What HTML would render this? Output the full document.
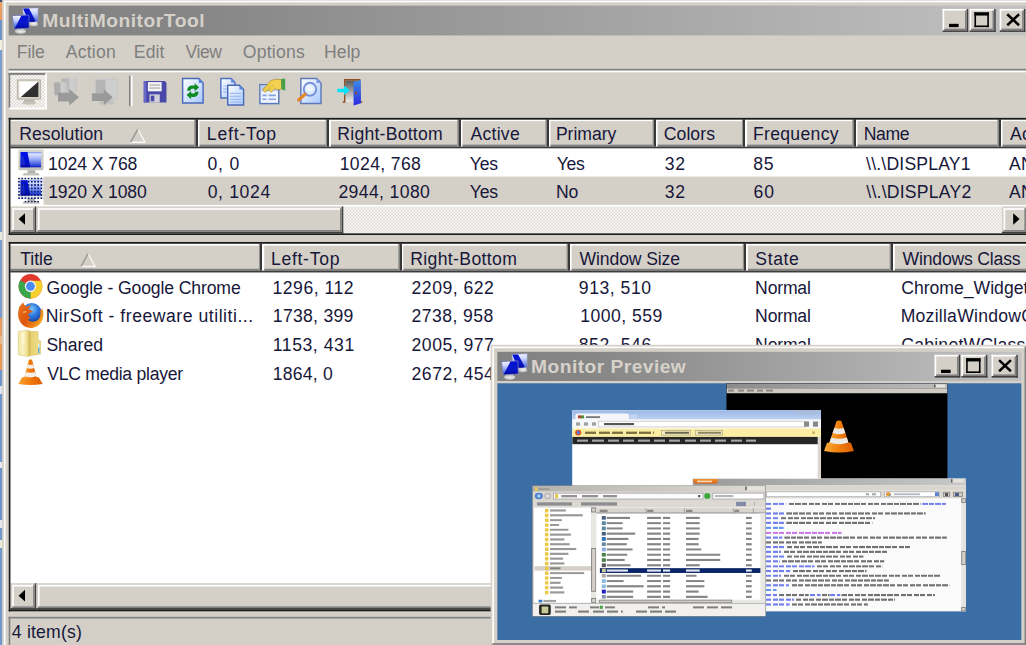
<!DOCTYPE html>
<html><head><meta charset="utf-8"><title>MultiMonitorTool</title>
<style>
html,body{margin:0;padding:0;}
body{width:1026px;height:645px;overflow:hidden;position:relative;background:#D4D0C8;font-family:"Liberation Sans",sans-serif;}
#all{position:absolute;left:-40px;top:-40px;width:1120px;height:740px;}
#in{position:absolute;left:40px;top:40px;width:1040px;height:660px;}
#strip{position:absolute;left:0;top:0;width:4px;height:645px;
 background:linear-gradient(180deg,#3b4a78 0,#3b4a78 2px,#e9a062 2px,#e59a5e 20px,#6f93c6 20px,#6f93c6 40px,#eef0e2 40px,#eef0e2 50px,
 #7c9dcb 50px,#7c9dcb 120px,#8aa6d0 120px,#93a8cc 160px,#7c9dcb 160px,#7c9dcb 232px,#e6eadf 232px,#e6eadf 240px,#7c9dcb 240px,#7c9dcb 318px,
 #e89a5c 318px,#e6a06a 336px,#eab88a 336px,#eab88a 344px,#ea9a58 344px,#ea9a58 370px,#6e96cc 370px,#6e96cc 386px,#dfe6f0 386px,#dfe6f0 394px,
 #6e96cc 394px,#7098cc 462px,#e8ecf0 462px,#e8ecf0 468px,#6c94ca 468px,#6c94ca 520px,#e4e8ee 520px,#e4e8ee 528px,#7298cc 528px,#7298cc 540px,
 #e8eadc 540px,#e8eadc 548px,#7298cc 548px,#7298cc 645px);}
#w{position:absolute;left:0;top:0;width:6460px;height:4120px;transform-origin:0 0;transform:translate(2.3px,-1.0px) scale(0.16,0.1655);
 background:#D4D0C8;font-size:110px;}
#w div,#w span,#w i{position:absolute;box-sizing:border-box;}
.frame{left:0;top:0;right:0;bottom:0;box-shadow:inset 10px 10px #D6D2CA,inset -10px -10px #404040,inset 20px 20px #fff,inset -20px -20px #808080;}
.title{height:180px;background:linear-gradient(90deg,#828282 0,#868686 18%,#c2c2c2 100%);}
.t{white-space:pre;line-height:130px;font-size:110px;color:#17173a;}
.tt{font-weight:bold;color:#D6D2CA;transform:scaleX(1.09);transform-origin:0 50%;}
.menu{color:#7e7e7e;}
.ico{width:160px;height:160px;}
.ico svg{position:absolute;left:0;top:0;display:block;overflow:visible;}
.cb{background:#D4D0C8;box-shadow:inset -10px -10px #404040,inset 10px 10px #fff,inset -20px -20px #808080,inset 20px 20px #D4D0C8;}
.cb svg{position:absolute;left:0;top:0;}
.gmin{left:40px;top:90px;width:60px;height:20px;background:#000;}
.gmax{left:30px;top:20px;width:90px;height:90px;box-shadow:inset 0 0 0 10px #000,inset 0 20px #000;}
.etch{height:20px;border-top:10px solid #808080;border-bottom:10px solid #fff;}
.tbchk{box-shadow:inset 10px 10px #808080,inset -10px -10px #fff;background:repeating-conic-gradient(#fdfdfc 0 25%,#dad7d0 0 50%) 0 0/20px 20px;}
.tbsep{width:20px;border-left:10px solid #808080;border-right:10px solid #fff;}
.list{box-shadow:inset 0 0 0 10.6px #1c1c1c;}
.hdr{background:#D4D0C8;box-shadow:inset 0 10px #fff,inset 0 -10px #404040,inset 0 -20px #808080;}
.hsep{background:linear-gradient(90deg,#a09e96 0,#808080 9px,#383838 9.5px,#383838 21px,#fff 21.5px,#fff 33px);}
.sort{width:100px;height:90px;}
.sbtrack{background:repeating-conic-gradient(#fbfbfa 0 25%,#dcd9d2 0 50%) 0 0/20px 20px;}
.btn3d{background:#D4D0C8;box-shadow:inset -10px -10px #404040,inset 10px 10px #D4D0C8,inset -20px -20px #808080,inset 20px 20px #fff;}
.arl{left:50px;top:40px;width:0;height:0;border-right:40px solid #000;border-top:35px solid transparent;border-bottom:35px solid transparent;}
.arr{left:70px;top:40px;width:0;height:0;border-left:40px solid #000;border-top:35px solid transparent;border-bottom:35px solid transparent;}
.status{box-shadow:inset 10px 10px #808080,inset -10px -10px #fff;}
#pv{background:#D4D0C8;}
#pvc{background:#3A6EA5;overflow:hidden;}

</style></head>
<body>
<div id="all"><div id="in">
<div id="strip"></div>
<div id="w">
<div style="left:0;top:0;right:0;bottom:0"><div style="left:0;top:0;right:0;height:10px;background:#D6D2CA"></div><div style="left:0;top:0;bottom:0;width:10px;background:#D6D2CA"></div><div style="left:10px;top:10px;right:10px;height:10px;background:#fff"></div><div style="left:10px;top:10px;bottom:10px;width:10px;background:#fff"></div><div style="left:0;bottom:0;right:0;height:10px;background:#404040"></div><div style="right:0;top:0;bottom:0;width:10px;background:#404040"></div><div style="left:10px;bottom:10px;right:10px;height:10px;background:#808080"></div><div style="right:10px;top:10px;bottom:10px;width:10px;background:#808080"></div></div>
<div class="title" style="left:40px;top:39.9px;width:6445.6px;height:180.1px;"></div><div class="ico" style="left:60px;top:55px"><svg style="width:160px;height:160px" viewBox="0 0 16 16">
<defs>
<linearGradient id="apL" x1="0" y1="0" x2="0" y2="1"><stop offset="0" stop-color="#f2f4ff"/><stop offset=".35" stop-color="#c8d2ff"/><stop offset="1" stop-color="#3858e0"/></linearGradient>
<linearGradient id="apD" x1="0" y1="0" x2="0" y2="1"><stop offset="0" stop-color="#0010d8"/><stop offset=".6" stop-color="#0818c8"/><stop offset="1" stop-color="#0008a0"/></linearGradient>
<radialGradient id="apS" cx=".55" cy=".4" r=".7"><stop offset="0" stop-color="#f4f4f4"/><stop offset=".6" stop-color="#cfcfcf"/><stop offset="1" stop-color="#8a8a8a"/></radialGradient>
</defs>
<path d="M10.8 8 L15.6 7.8 L16.4 10.4 Q13.8 11.6 10.6 10.8Z" fill="url(#apS)"/>
<path d="M6.8 0.1 L16.4 -0.1 L16.2 8.2 L7.4 8.5Z" fill="url(#apL)" stroke="#98a0c0" stroke-width=".35"/>
<path d="M7 0.3 L10.7 0.25 L14.5 7.3 L14.3 8.2 L10.6 8.35Z" fill="url(#apD)"/>
<ellipse cx="5.3" cy="14.1" rx="3.5" ry="1.6" fill="url(#apS)"/>
<path d="M3.6 12.2 h3.8 v1.4 h-3.8z" fill="#c4c4c4"/>
<path d="M0.3 4.6 L10.6 4.2 L10.8 12.1 L1.5 12.6Z" fill="url(#apD)" stroke="#98a0c0" stroke-width=".35"/>
<path d="M0.55 4.8 L5.9 4.55 L2.2 11.4 L1.5 12.2Z" fill="url(#apL)"/>
</svg></div><span class="t tt" style="left:248.8px;top:64.1px;letter-spacing:3.15px;">MultiMonitorTool</span>
<div style="left:5876.9px;top:59.8px;width:160.6px;height:139.6px;background:#D4D0C8"><div style="left:0;top:0;right:0;height:10px;background:#fff"></div><div style="left:0;top:0;bottom:0;width:10px;background:#fff"></div><div style="left:0;bottom:0;right:0;height:10px;background:#404040"></div><div style="right:0;top:0;bottom:0;width:10px;background:#404040"></div><div style="left:10px;bottom:10px;right:10px;height:10px;background:#808080"></div><div style="right:10px;top:10px;bottom:10px;width:10px;background:#808080"></div><i class="gmin"></i></div><div style="left:6045.6px;top:59.8px;width:163.1px;height:139.6px;background:#D4D0C8"><div style="left:0;top:0;right:0;height:10px;background:#fff"></div><div style="left:0;top:0;bottom:0;width:10px;background:#fff"></div><div style="left:0;bottom:0;right:0;height:10px;background:#404040"></div><div style="right:0;top:0;bottom:0;width:10px;background:#404040"></div><div style="left:10px;bottom:10px;right:10px;height:10px;background:#808080"></div><div style="right:10px;top:10px;bottom:10px;width:10px;background:#808080"></div><div style="left:30px;top:20px;width:90px;height:90px"><div style="left:0;top:0;right:0;height:20px;background:#000"></div><div style="left:0;bottom:0;right:0;height:10px;background:#000"></div><div style="left:0;top:0;bottom:0;width:10px;background:#000"></div><div style="right:0;top:0;bottom:0;width:10px;background:#000"></div></div></div><div style="left:6233.8px;top:59.8px;width:160.6px;height:139.6px;background:#D4D0C8"><div style="left:0;top:0;right:0;height:10px;background:#fff"></div><div style="left:0;top:0;bottom:0;width:10px;background:#fff"></div><div style="left:0;bottom:0;right:0;height:10px;background:#404040"></div><div style="right:0;top:0;bottom:0;width:10px;background:#404040"></div><div style="left:10px;bottom:10px;right:10px;height:10px;background:#808080"></div><div style="right:10px;top:10px;bottom:10px;width:10px;background:#808080"></div><svg style="width:160px;height:140px" viewBox="0 0 16 14"><path d="M4.7 3.2 L12.1 9.9 M12.1 3.2 L4.7 9.9" stroke="#000" stroke-width="1.55" fill="none"/></svg></div>
<span class="t menu" style="left:90.7px;top:256.2px;letter-spacing:-0.95px;">File</span><span class="t menu" style="left:396.8px;top:256.2px;letter-spacing:1.24px;">Action</span><span class="t menu" style="left:822.2px;top:256.2px;letter-spacing:0.38px;">Edit</span><span class="t menu" style="left:1144.7px;top:256.2px;letter-spacing:-2.5px;">View</span><span class="t menu" style="left:1503.5px;top:256.2px;letter-spacing:1.31px;">Options</span><span class="t menu" style="left:2011.2px;top:256.2px;letter-spacing:0.2px;">Help</span>
<div style="left:40px;top:422.4px;width:6445.6px;height:10.9px;background:#808080"></div><div style="left:40px;top:433.2px;width:6445.6px;height:10.3px;background:#fff"></div>
<div class="tbchk" style="left:38.8px;top:447.1px;width:240.6px;height:219.9px;"><div style="left:0;top:0;right:0;height:10px;background:#808080"></div><div style="left:0;top:0;bottom:0;width:10px;background:#808080"></div><div style="left:0;bottom:0;right:0;height:10px;background:#fff"></div><div style="right:0;top:0;bottom:0;width:10px;background:#fff"></div></div><div class="ico" style="left:90px;top:486.4px"><svg style="width:160px;height:160px" viewBox="0 0 16 16">
<rect x="0.4" y="0.3" width="14.4" height="11.6" fill="#d8d4c8" stroke="#b4b0a4" stroke-width=".6"/>
<rect x="1.6" y="1.2" width="12" height="9.4" fill="#fff"/>
<path d="M13.6 1.2 L13.6 10.6 L2.6 10.6Z" fill="#303030"/>
<path d="M5 12 h5.6 l0.8 1.6 h-7.2z" fill="#b8b8b0"/>
<ellipse cx="7.8" cy="14.3" rx="4.6" ry="1" fill="#c4c4bc"/>
</svg></div><div class="ico" style="left:320px;top:476.1px"><svg style="width:160px;height:160px" viewBox="0 0 16 16">
<defs><linearGradient id="dsA" x1="0" y1="0" x2="1" y2="0"><stop offset="0" stop-color="#b2b2b2"/><stop offset=".45" stop-color="#bcbcbc"/><stop offset=".55" stop-color="#cfcfcf"/><stop offset="1" stop-color="#c6c6c6"/></linearGradient></defs>
<g>
<path d="M5 0.4 L14.8 0.2 L14.6 8.6 L5.4 9Z" fill="url(#dsA)"/>
<path d="M0.2 3 L8.2 2.6 L8.4 10.2 L0.8 10.6Z" fill="url(#dsA)"/>
<path d="M0.2 3 L4.2 2.8 L4.4 10.4 L0.8 10.6Z" fill="#adadad"/>
<path d="M2.8 9 L9.8 9 L9.8 6.8 L16 11.8 L9.8 16.8 L9.8 14.4 L2.8 14.4Z" fill="#9a9a9a"/>
</g>
</svg></div><div class="ico" style="left:560px;top:476.1px"><svg style="width:160px;height:160px" viewBox="0 0 16 16">
<g>
<path d="M1.8 0.6 L16.2 0.4 L16.2 13.4 L1.8 13.4Z" fill="#c8c8c8"/>
<path d="M2.6 1.4 L8.6 1.4 L8.6 9.4 L2.6 9.4Z" fill="#b4b4b4"/>
<path d="M8.6 1.4 L15.4 1.4 L15.4 12.4 L8.6 12.4Z" fill="#cecece"/>
<path d="M5.4 13.4 L13 13.4 L14.2 16.2 L4.2 16.2Z" fill="#c2c2c2"/>
<path d="M0 9.4 L7.4 9.4 L7.4 7 L13 11.8 L7.4 16.6 L7.4 14 L0 14Z" fill="#9a9a9a"/>
</g>
</svg></div><div class="ico" style="left:880px;top:476.1px"><svg style="width:160px;height:160px" viewBox="0 0 16 16">
<path d="M0.4 2 L13.6 2 L14.6 3 L14.6 15 L0.4 15Z" fill="#4848a8"/>
<path d="M0.4 2 L2 2 L2 15 L0.4 15Z" fill="#6868c8"/>
<rect x="3" y="2.6" width="8.6" height="5.6" fill="#f4f4f4"/>
<rect x="4" y="4" width="6.6" height=".8" fill="#b0b0b0"/><rect x="4" y="5.8" width="6.6" height=".8" fill="#b0b0b0"/>
<rect x="4" y="10" width="6.4" height="5" fill="#d0d0d8"/>
<rect x="4.8" y="10.8" width="2.2" height="3.4" fill="#4848a8"/>
</svg></div><div class="ico" style="left:1120px;top:476.1px"><svg style="width:160px;height:160px" viewBox="0 0 16 16"><defs><linearGradient id="pgA" x1="0" y1="0" x2="1" y2="1"><stop offset="0" stop-color="#ffffff"/><stop offset="1" stop-color="#a8c8ff"/></linearGradient></defs>
<path d="M0.7 0.5 L10.8 0.5 L13.5 3.2 L13.5 15.3 L0.7 15.3Z" fill="url(#pgA)" stroke="#4868b8" stroke-width=".9"/>
<path d="M10.8 0.5 L10.8 3.2 L13.5 3.2Z" fill="#5888e0"/>
<path d="M3.6 7.8 C3.6 5 5.8 4.2 8.2 4.8 L8.2 3.2 L11 5.8 L8.2 8.2 L8.2 6.8 C6.6 6.5 5.6 6.9 5.6 7.8Z" fill="#0c8c20"/>
<path d="M10.6 8.4 C10.6 11.2 8.4 12 6 11.4 L6 13 L3.2 10.4 L6 8 L6 9.4 C7.6 9.7 8.6 9.3 8.6 8.4Z" fill="#0c8c20"/>
</svg></div><div class="ico" style="left:1360px;top:476.1px"><svg style="width:160px;height:160px" viewBox="0 0 16 16"><defs><linearGradient id="pgA" x1="0" y1="0" x2="1" y2="1"><stop offset="0" stop-color="#ffffff"/><stop offset="1" stop-color="#a8c8ff"/></linearGradient></defs>
<path d="M0.6 0.5 L7 0.5 L9.4 2.9 L9.4 12.2 L0.6 12.2Z" fill="url(#pgA)" stroke="#5070c0" stroke-width=".9"/>
<path d="M7 0.5 L7 2.9 L9.4 2.9Z" fill="#5888e0"/>
<path d="M2 5 h5.6 M2 6.8 h5.6 M2 8.6 h5.6" stroke="#a8c4f4" stroke-width=".8"/>
<path d="M4.9 4.5 L12.2 4.5 L14.8 7.1 L14.8 16.4 L4.9 16.4Z" fill="url(#pgA)" stroke="#4868b8" stroke-width=".9"/>
<path d="M12.2 4.5 L12.2 7.1 L14.8 7.1Z" fill="#5888e0"/>
<path d="M6.2 9.4 h7.2 M6.2 11.2 h7.2 M6.2 13 h7.2 M6.2 14.7 h7.2" stroke="#9cbcf4" stroke-width=".8"/>
</svg></div><div class="ico" style="left:1600px;top:476.1px"><svg style="width:160px;height:160px" viewBox="0 0 16 16">
<rect x="1" y="4.2" width="11.8" height="11.4" fill="#eef3ff" stroke="#5878b8" stroke-width=".9"/>
<rect x="1.5" y="4.7" width="10.8" height="3.4" fill="#b8ccf4"/>
<path d="M2.6 10.6 h2.6 M6.4 10.6 h4.6 M2.6 13 h2.6 M6.4 13 h4.6" stroke="#88a4dc" stroke-width="1"/>
<path d="M2.6 7.4 L7.2 2.2 C8.6 0.8 12.6 0.8 14.6 1.2 L14.8 6.6 C13.2 7.4 11.4 7.2 10.2 6.6 L8.2 8.8 L6.2 7.2 L4.2 8.8Z" fill="#f2d24e" stroke="#a88820" stroke-width=".4"/>
<path d="M3.4 7.6 L7.6 3.2 M5 8 L8.6 4 M6.6 7.6 L9.6 4.4" stroke="#b89828" stroke-width=".45" stroke-dasharray=".7 .6"/>
<path d="M14.2 0.8 L16.8 0.4 L16.8 7.8 L14.4 6.8Z" fill="#48a048"/>
</svg></div><div class="ico" style="left:1840px;top:476.1px"><svg style="width:160px;height:160px" viewBox="0 0 16 16"><defs><linearGradient id="pgA" x1="0" y1="0" x2="1" y2="1"><stop offset="0" stop-color="#ffffff"/><stop offset="1" stop-color="#a8c8ff"/></linearGradient></defs>
<path d="M2.6 0.4 L12.4 0.4 L15.2 3.2 L15.2 15.5 L2.6 15.5Z" fill="url(#pgA)" stroke="#6078b8" stroke-width=".9"/>
<path d="M12.4 0.4 L12.4 3.2 L15.2 3.2Z" fill="#7898e0"/>
<circle cx="8.3" cy="6.9" r="3.9" fill="#dceaff" stroke="#7890d8" stroke-width="1.2"/>
<circle cx="8" cy="6.4" r="2" fill="#f4f8ff" opacity=".8"/>
<path d="M5.2 9.9 L1.2 13.4" stroke="#e08828" stroke-width="2" stroke-linecap="round"/>
</svg></div><div class="ico" style="left:2080px;top:476.1px"><svg style="width:160px;height:160px" viewBox="0 0 16 16">
<defs><linearGradient id="drA" x1="0" y1="0" x2="0" y2="1"><stop offset="0" stop-color="#3c8ce8"/><stop offset="1" stop-color="#2c28e0"/></linearGradient>
<linearGradient id="drB" x1="0" y1="0" x2="0" y2="1"><stop offset="0" stop-color="#585858"/><stop offset="1" stop-color="#e8e8e8"/></linearGradient></defs>
<path d="M6.4 1.6 L15 1.6 L15 14.4 L6.4 14.4Z" fill="url(#drB)"/>
<path d="M4.8 14.6 L6 14.6 L6 1.2 L15.4 1.2 L15.4 14.6 L17 14.6" fill="none" stroke="#905020" stroke-width=".9"/>
<path d="M11.4 2.6 L16 1.4 L16.2 15.4 L11.6 16.8Z" fill="url(#drA)"/>
<rect x="12.6" y="8.4" width="1.1" height="1.6" fill="#905020"/>
<path d="M1.4 6.6 L5.6 6.6 L5.6 4.6 L9.2 7.6 L5.6 10.6 L5.6 8.7 L1.4 8.7Z" fill="#00e4f8"/>
</svg></div><div style="left:791.9px;top:463.4px;width:10.6px;height:184.9px;background:#808080"></div><div style="left:802.5px;top:463.4px;width:11.9px;height:184.9px;background:#fff"></div>
<div style="left:40px;top:718.1px;width:6445.6px;height:708.2px;background:#fff"></div><div style="left:50px;top:728.4px;width:6435.6px;height:173.7px;background:#D4D0C8"><div style="left:0;top:0;right:0;height:10px;background:#fff"></div><div style="left:0;bottom:10px;right:0;height:12px;background:#808080"></div><div style="left:0;bottom:0;right:0;height:10.5px;background:#3c3c3c"></div></div><div class="hsep" style="left:1199.4px;top:726.6px;width:32.5px;height:164px;"></div><div class="hsep" style="left:2021.2px;top:726.6px;width:32.5px;height:164px;"></div><div class="hsep" style="left:2843.1px;top:726.6px;width:32.5px;height:164px;"></div><div class="hsep" style="left:3393.8px;top:726.6px;width:32.5px;height:164px;"></div><div class="hsep" style="left:4063.8px;top:726.6px;width:32.5px;height:164px;"></div><div class="hsep" style="left:4622.5px;top:726.6px;width:32.5px;height:164px;"></div><div class="hsep" style="left:5311.9px;top:726.6px;width:32.5px;height:164px;"></div><div class="hsep" style="left:6218.8px;top:726.6px;width:32.5px;height:164px;"></div><span class="t h" style="left:105.2px;top:750.5px;letter-spacing:0.55px;">Resolution</span><span class="t h" style="left:1278.3px;top:750.5px;letter-spacing:5px;">Left-Top</span><span class="t h" style="left:2093.7px;top:750.5px;letter-spacing:1.52px;">Right-Bottom</span><span class="t h" style="left:2925.7px;top:750.5px;letter-spacing:1.75px;">Active</span><span class="t h" style="left:3460px;top:750.5px;letter-spacing:-0.24px;">Primary</span><span class="t h" style="left:4134.3px;top:750.5px;letter-spacing:0.37px;">Colors</span><span class="t h" style="left:4691.2px;top:750.5px;letter-spacing:1.96px;">Frequency</span><span class="t h" style="left:5383.7px;top:750.5px;letter-spacing:-2.5px;">Name</span><span class="t h" style="left:6298px;top:750.5px;letter-spacing:1.5px;">Ac</span><div class="sort" style="left:796.9px;top:769.2px"><svg style="width:100px;height:90px" viewBox="0 0 10 9"><path d="M5 0.6 L9.5 8.4 L0.5 8.4" fill="none" stroke="#fff" stroke-width=".9" opacity=".8"/><path d="M5 0.6 L0.6 8.2" fill="none" stroke="#9a9a96" stroke-width=".95"/></svg></div>
<div style="left:258.1px;top:1072.5px;width:6227.5px;height:171px;background:#D4D0C8"></div><div class="ico" style="left:99.4px;top:908.8px"><svg style="width:160px;height:160px" viewBox="0 0 16 16">
<defs>
<linearGradient id="mnR" x1="0" y1="0" x2="0" y2="1"><stop offset="0" stop-color="#6f8cf4"/><stop offset=".12" stop-color="#dfe6ff"/><stop offset=".45" stop-color="#9fb0f8"/><stop offset=".85" stop-color="#3450e0"/><stop offset="1" stop-color="#0818b4"/></linearGradient>
<linearGradient id="mnL" x1="0" y1="0" x2="0" y2="1"><stop offset="0" stop-color="#0010ec"/><stop offset=".6" stop-color="#0010d0"/><stop offset="1" stop-color="#0008a0"/></linearGradient>
<linearGradient id="mnF" x1="0" y1="0" x2="0" y2="1"><stop offset="0" stop-color="#d6d6ce"/><stop offset="1" stop-color="#c2c2ba"/></linearGradient>
</defs>
<rect x="0.2" y="0.1" width="15.7" height="12.4" rx=".7" fill="url(#mnF)"/>
<rect x="1.5" y="1.6" width="12.8" height="9.2" fill="url(#mnR)"/>
<path d="M1.5 1.6 L5.8 1.6 L7.6 10.8 L1.5 10.8Z" fill="url(#mnL)"/>
<path d="M1.5 4.5 L3.4 3.6 L4.4 9.4 L1.5 9.8Z" fill="#3040d8" opacity=".5"/>
<path d="M5.9 12.5 h4.8 v1.7 h-4.8z" fill="#b2b2aa"/>
<path d="M3.6 14.2 h9 l.9 1.6 h-10.8z" fill="#c2c2ba"/>
</svg></div><div class="ico" style="left:99.4px;top:1079.2px"><svg style="width:160px;height:160px" viewBox="0 0 16 16">
<defs>
<linearGradient id="mnR" x1="0" y1="0" x2="0" y2="1"><stop offset="0" stop-color="#6f8cf4"/><stop offset=".12" stop-color="#dfe6ff"/><stop offset=".45" stop-color="#9fb0f8"/><stop offset=".85" stop-color="#3450e0"/><stop offset="1" stop-color="#0818b4"/></linearGradient>
<linearGradient id="mnL" x1="0" y1="0" x2="0" y2="1"><stop offset="0" stop-color="#0010ec"/><stop offset=".6" stop-color="#0010d0"/><stop offset="1" stop-color="#0008a0"/></linearGradient>
<linearGradient id="mnF" x1="0" y1="0" x2="0" y2="1"><stop offset="0" stop-color="#d6d6ce"/><stop offset="1" stop-color="#c2c2ba"/></linearGradient>
</defs>
<rect x="0.2" y="0.1" width="15.7" height="12.4" rx=".7" fill="#e8e8e4"/>
<rect x="1.5" y="1.6" width="12.8" height="9.2" fill="url(#mnR)"/>
<path d="M1.5 1.6 L5.8 1.6 L7.6 10.8 L1.5 10.8Z" fill="url(#mnL)"/>
<path d="M1.5 4.5 L3.4 3.6 L4.4 9.4 L1.5 9.8Z" fill="#3040d8" opacity=".5"/>
<path d="M5.9 12.5 h4.8 v1.7 h-4.8z" fill="#b2b2aa"/>
<path d="M3.6 14.2 h9 l.9 1.6 h-10.8z" fill="#c2c2ba"/>

<defs><pattern id="dth" width="2" height="2" patternUnits="userSpaceOnUse"><rect x="0" y="0" width="1.05" height="1.05" fill="#0a1c78"/></pattern></defs>
<rect x="0" y="0" width="16" height="13" fill="url(#dth)"/>
<rect x="4" y="14" width="9" height="1.1" fill="url(#dth)"/></svg></div><span class="t c" style="left:285.9px;top:927.5px;letter-spacing:-0.49px;">1024 X 768</span><span class="t c" style="left:1282.2px;top:927.5px;letter-spacing:5px;">0, 0</span><span class="t c" style="left:2108.9px;top:927.5px;letter-spacing:2.22px;">1024, 768</span><span class="t c" style="left:2922.1px;top:927.5px;letter-spacing:-1.7px;">Yes</span><span class="t c" style="left:3465.2px;top:927.5px;letter-spacing:-1.7px;">Yes</span><span class="t c" style="left:4140.4px;top:927.5px;letter-spacing:5px;">32</span><span class="t c" style="left:4694.2px;top:927.5px;letter-spacing:3.4px;">85</span><span class="t c" style="left:5398.5px;top:927.5px;letter-spacing:1.21px;">\\.\DISPLAY1</span><span class="t c" style="left:6291.7px;top:927.5px;letter-spacing:1.5px;">AN</span><span class="t c" style="left:286.5px;top:1097.9px;letter-spacing:-0.74px;">1920 X 1080</span><span class="t c" style="left:1283.7px;top:1097.9px;letter-spacing:3.94px;">0, 1024</span><span class="t c" style="left:2100.7px;top:1097.9px;letter-spacing:2.34px;">2944, 1080</span><span class="t c" style="left:2922.1px;top:1097.9px;letter-spacing:-1.7px;">Yes</span><span class="t c" style="left:3461px;top:1097.9px;letter-spacing:-1.75px;">No</span><span class="t c" style="left:4140.4px;top:1097.9px;letter-spacing:5px;">32</span><span class="t c" style="left:4695.3px;top:1097.9px;letter-spacing:5px;">60</span><span class="t c" style="left:5399.9px;top:1097.9px;letter-spacing:1.49px;">\\.\DISPLAY2</span><span class="t c" style="left:6291.7px;top:1097.9px;letter-spacing:1.5px;">AN</span>
<div class="sbtrack" style="left:50px;top:1254.4px;width:6435.6px;height:161.3px;"></div><div style="left:51.9px;top:1254.4px;width:161.2px;height:161.3px;background:#D4D0C8"><div style="left:10px;top:10px;right:10px;height:10px;background:#fff"></div><div style="left:10px;top:10px;bottom:10px;width:10px;background:#fff"></div><div style="left:0;bottom:0;right:0;height:10px;background:#404040"></div><div style="right:0;top:0;bottom:0;width:10px;background:#404040"></div><div style="left:10px;bottom:10px;right:10px;height:10px;background:#808080"></div><div style="right:10px;top:10px;bottom:10px;width:10px;background:#808080"></div><i class="arl"></i></div><div style="left:213.1px;top:1254.4px;width:1917.5px;height:161.3px;background:#D4D0C8"><div style="left:10px;top:10px;right:10px;height:10px;background:#fff"></div><div style="left:10px;top:10px;bottom:10px;width:10px;background:#fff"></div><div style="left:0;bottom:0;right:0;height:10px;background:#404040"></div><div style="right:0;top:0;bottom:0;width:10px;background:#404040"></div><div style="left:10px;bottom:10px;right:10px;height:10px;background:#808080"></div><div style="right:10px;top:10px;bottom:10px;width:10px;background:#808080"></div></div><div style="left:6248.1px;top:1254.4px;width:160px;height:161.3px;background:#D4D0C8"><div style="left:10px;top:10px;right:10px;height:10px;background:#fff"></div><div style="left:10px;top:10px;bottom:10px;width:10px;background:#fff"></div><div style="left:0;bottom:0;right:0;height:10px;background:#404040"></div><div style="right:0;top:0;bottom:0;width:10px;background:#404040"></div><div style="left:10px;bottom:10px;right:10px;height:10px;background:#808080"></div><div style="right:10px;top:10px;bottom:10px;width:10px;background:#808080"></div><i class="arr"></i></div>
<div style="left:40px;top:718.1px;width:6445.6px;height:708.2px;"><div style="left:0;top:0;right:0;height:10.6px;background:#1c1c1c"></div><div style="left:0;top:0;bottom:0;width:10.6px;background:#1c1c1c"></div><div style="left:0;bottom:0;right:0;height:10.6px;background:#1c1c1c"></div><div style="right:0;top:0;bottom:0;width:10.6px;background:#1c1c1c"></div></div>
<div style="left:40px;top:1468px;width:6445.6px;height:2231.7px;background:#fff"></div><div style="left:50px;top:1479.5px;width:6435.6px;height:172.5px;background:#D4D0C8"><div style="left:0;top:0;right:0;height:10px;background:#fff"></div><div style="left:0;bottom:10px;right:0;height:12px;background:#808080"></div><div style="left:0;bottom:0;right:0;height:10.5px;background:#3c3c3c"></div></div><div class="hsep" style="left:1604.4px;top:1477.6px;width:32.5px;height:162.8px;"></div><div class="hsep" style="left:2473.8px;top:1477.6px;width:32.5px;height:162.8px;"></div><div class="hsep" style="left:3525.6px;top:1477.6px;width:32.5px;height:162.8px;"></div><div class="hsep" style="left:4627.5px;top:1477.6px;width:32.5px;height:162.8px;"></div><div class="hsep" style="left:5545px;top:1477.6px;width:32.5px;height:162.8px;"></div><span class="t h" style="left:112.1px;top:1501.5px;letter-spacing:-0.07px;">Title</span><span class="t h" style="left:1679.2px;top:1501.5px;letter-spacing:4.35px;">Left-Top</span><span class="t h" style="left:2549.1px;top:1501.5px;letter-spacing:2.29px;">Right-Bottom</span><span class="t h" style="left:3608px;top:1501.5px;letter-spacing:-0.76px;">Window Size</span><span class="t h" style="left:4706.7px;top:1501.5px;letter-spacing:3.59px;">State</span><span class="t h" style="left:5626.9px;top:1501.5px;letter-spacing:-1.22px;">Windows Class</span><div class="sort" style="left:485.6px;top:1520.8px"><svg style="width:100px;height:90px" viewBox="0 0 10 9"><path d="M5 0.6 L9.5 8.4 L0.5 8.4" fill="none" stroke="#fff" stroke-width=".9" opacity=".8"/><path d="M5 0.6 L0.6 8.2" fill="none" stroke="#9a9a96" stroke-width=".95"/></svg></div>
<div class="ico" style="left:95.6px;top:1655.6px"><svg style="width:160px;height:160px" viewBox="0 0 16 16">
<circle cx="8" cy="8" r="7.4" fill="#e23a2e"/>
<path d="M8 8 L1.6 4.3 A7.4 7.4 0 0 0 8.2 15.4 L11.3 9.9Z" fill="#3aa84a"/>
<path d="M8 8 L8.2 15.4 A7.4 7.4 0 0 0 14.6 4.6 L8 4.6Z" fill="#f7cf2e"/>
<circle cx="8" cy="8" r="3.5" fill="#f4f4f4"/>
<circle cx="8" cy="8" r="2.7" fill="#4a8af0"/>
</svg></div><span class="t c" style="left:277px;top:1677.7px;letter-spacing:-0.77px;">Google - Google Chrome</span><span class="t c" style="left:1689.2px;top:1677.7px;letter-spacing:3.05px;">1296, 112</span><span class="t c" style="left:2558px;top:1677.7px;letter-spacing:3.12px;">2209, 622</span><span class="t c" style="left:3603.4px;top:1677.7px;letter-spacing:3.23px;">913, 510</span><span class="t c" style="left:4705.1px;top:1677.7px;letter-spacing:-1.2px;">Normal</span><span class="t c" style="left:5618.1px;top:1677.7px;letter-spacing:0px;">Chrome_WidgetWin_0</span>
<div class="ico" style="left:95.6px;top:1827.8px"><svg style="width:160px;height:160px" viewBox="0 0 16 16">
<defs><radialGradient id="ffG" cx=".5" cy=".3" r=".65"><stop offset="0" stop-color="#7cc4fa"/><stop offset=".5" stop-color="#2c78dc"/><stop offset="1" stop-color="#183c9c"/></radialGradient>
<linearGradient id="ffO" x1="0" y1="0.2" x2="1" y2="0.8"><stop offset="0" stop-color="#e8701c"/><stop offset=".45" stop-color="#de5610"/><stop offset=".8" stop-color="#f08c18"/><stop offset="1" stop-color="#f8b82c"/></linearGradient></defs>
<circle cx="8.8" cy="7.2" r="6.3" fill="url(#ffG)"/>
<path d="M1.4 2.6 C2.2 2.2 2.8 1.2 3.4 0.4 C3.8 1.8 4.6 2.6 5.6 3 C6.6 2.4 7.6 2.2 8.6 2.4 C7.6 3 7 3.8 6.8 4.8 C7.8 5 8.8 5.4 9.6 6.2 C8.4 6.6 7.4 6.8 6.8 7.6 C6.4 8.6 7 9.6 8.2 9.8 C7.4 10.6 6.4 11 6.4 11 C8 12.6 11 12.6 12.8 11 C14.2 9.6 14.6 7.4 14 5.2 C14.8 5.6 15.2 4.8 15.2 3.8 C16.4 6.4 16.4 9.8 14.9 12.2 C13 15.2 9.6 16.6 6.2 15.7 C2.4 14.6 0 11 0.3 7.2 C0.4 5.4 0.8 3.8 1.4 2.6Z" fill="url(#ffO)"/>
<path d="M3 6.4 C3.8 5.6 5 5.6 5.8 6 C5 6.6 4 7.4 3 6.4Z" fill="#f8c860" opacity=".7"/>
</svg></div><span class="t c" style="left:270.8px;top:1850.8px;letter-spacing:3.31px;">NirSoft - freeware utiliti...</span><span class="t c" style="left:1690.8px;top:1850.8px;letter-spacing:1.71px;">1738, 399</span><span class="t c" style="left:2557.9px;top:1850.8px;letter-spacing:2.6px;">2738, 958</span><span class="t c" style="left:3611.9px;top:1850.8px;letter-spacing:2.87px;">1000, 559</span><span class="t c" style="left:4705.1px;top:1850.8px;letter-spacing:-1.2px;">Normal</span><span class="t c" style="left:5614.9px;top:1850.8px;letter-spacing:1.5px;">MozillaWindowClass</span>
<div class="ico" style="left:95.6px;top:2000px"><svg style="width:160px;height:160px" viewBox="0 0 16 16">
<defs><linearGradient id="fdA" x1="0" y1="0" x2="1" y2="0"><stop offset="0" stop-color="#f3e8a6"/><stop offset=".5" stop-color="#f8f0c0"/><stop offset="1" stop-color="#ecd97c"/></linearGradient>
<linearGradient id="fdB" x1="0" y1="0" x2="1" y2="0"><stop offset="0" stop-color="#e6cf6c"/><stop offset="1" stop-color="#f0e090"/></linearGradient></defs>
<path d="M8 0.9 L12.7 0.9 L12.7 5.9 L14.3 6.5 L14.3 14.5 L8 15.5Z" fill="url(#fdB)" stroke="#d9c36a" stroke-width=".4"/>
<path d="M0.4 0.9 L6.7 0.2 L6.7 16.1 L0.4 14.9Z" fill="url(#fdA)" stroke="#dccb7c" stroke-width=".4"/>
<path d="M6.7 0.2 L8.1 0.9 L8.1 15.5 L6.7 16.1Z" fill="#d6bd58"/>
<path d="M2.2 1.4 L4.2 1.2 L4.4 9 L2.6 9.4Z" fill="#fffbe0" opacity=".55"/>
<rect x="12.7" y="8.4" width=".9" height="5.6" fill="#58aee0"/>
<rect x="12.7" y="8.4" width=".9" height="2.2" fill="#e8f4fc"/>
</svg></div><span class="t c" style="left:275.5px;top:2023.9px;letter-spacing:-0.19px;">Shared</span><span class="t c" style="left:1690.7px;top:2023.9px;letter-spacing:3.44px;">1153, 431</span><span class="t c" style="left:2558px;top:2023.9px;letter-spacing:3.12px;">2005, 977</span><span class="t c" style="left:3602.6px;top:2023.9px;letter-spacing:3.62px;">852, 546</span><span class="t c" style="left:4705.1px;top:2023.9px;letter-spacing:-1.2px;">Normal</span><span class="t c" style="left:5618.1px;top:2023.9px;letter-spacing:1.5px;">CabinetWClass</span>
<div class="ico" style="left:95.6px;top:2172.2px"><svg style="width:160px;height:160px" viewBox="0 0 16 16">
<defs><linearGradient id="vlA" x1="0" y1="0" x2="1" y2="0"><stop offset="0" stop-color="#f8a434"/><stop offset=".45" stop-color="#f27c0c"/><stop offset="1" stop-color="#dc5c00"/></linearGradient></defs>
<path d="M0.4 15.5 L2.8 11.4 L13.2 11.4 L15.6 15.5 Q8 16.6 0.4 15.5Z" fill="url(#vlA)"/>
<path d="M7 1 Q8 0 9 1 L12 12 Q8 13.6 4 12Z" fill="url(#vlA)"/>
<path d="M6.3 3.6 Q8 4.2 9.7 3.6 L10.3 5.8 Q8 6.6 5.7 5.8Z" fill="#f2efea"/>
<path d="M5 8.2 Q8 9.2 11 8.2 L11.7 10.8 Q8 12.2 4.3 10.8Z" fill="#f2efea"/>
</svg></div><span class="t c" style="left:280.5px;top:2197px;letter-spacing:-1.67px;">VLC media player</span><span class="t c" style="left:1689.6px;top:2197px;letter-spacing:1.62px;">1864, 0</span><span class="t c" style="left:2558px;top:2197px;letter-spacing:3.12px;">2672, 454</span><span class="t c" style="left:3603.4px;top:2197px;letter-spacing:3.23px;">808, 454</span><span class="t c" style="left:4705.1px;top:2197px;letter-spacing:-1.2px;">Normal</span><span class="t c" style="left:5624.4px;top:2197px;letter-spacing:0px;">QWidget</span>
<div class="sbtrack" style="left:50px;top:3529.9px;width:6435.6px;height:160.1px;"></div><div style="left:51.9px;top:3529.9px;width:161.2px;height:160.1px;background:#D4D0C8"><div style="left:10px;top:10px;right:10px;height:10px;background:#fff"></div><div style="left:10px;top:10px;bottom:10px;width:10px;background:#fff"></div><div style="left:0;bottom:0;right:0;height:10px;background:#404040"></div><div style="right:0;top:0;bottom:0;width:10px;background:#404040"></div><div style="left:10px;bottom:10px;right:10px;height:10px;background:#808080"></div><div style="right:10px;top:10px;bottom:10px;width:10px;background:#808080"></div><i class="arl"></i></div><div style="left:213.1px;top:3529.9px;width:3772.5px;height:160.1px;background:#D4D0C8"><div style="left:10px;top:10px;right:10px;height:10px;background:#fff"></div><div style="left:10px;top:10px;bottom:10px;width:10px;background:#fff"></div><div style="left:0;bottom:0;right:0;height:10px;background:#404040"></div><div style="right:0;top:0;bottom:0;width:10px;background:#404040"></div><div style="left:10px;bottom:10px;right:10px;height:10px;background:#808080"></div><div style="right:10px;top:10px;bottom:10px;width:10px;background:#808080"></div></div>
<div style="left:40px;top:1468px;width:6445.6px;height:2231.7px;"><div style="left:0;top:0;right:0;height:10.6px;background:#1c1c1c"></div><div style="left:0;top:0;bottom:0;width:10.6px;background:#1c1c1c"></div><div style="left:0;bottom:0;right:0;height:10.6px;background:#1c1c1c"></div><div style="right:0;top:0;bottom:0;width:10.6px;background:#1c1c1c"></div></div>
<div style="left:40px;top:3732.9px;width:6445.6px;height:261px;"><div style="left:0;top:0;right:0;height:10px;background:#808080"></div><div style="left:0;top:0;bottom:0;width:10px;background:#808080"></div><div style="left:0;bottom:0;right:0;height:10px;background:#fff"></div><div style="right:0;top:0;bottom:0;width:10px;background:#fff"></div></div><span class="t c" style="left:59.8px;top:3758.9px;letter-spacing:1.16px;">4 item(s)</span>
<div id="pv" style="left:3053.1px;top:2090px;width:3355.6px;height:1822.4px"><div style="left:0;top:0;right:0;height:10px;background:#D6D2CA"></div><div style="left:0;top:0;bottom:0;width:10px;background:#D6D2CA"></div><div style="left:10px;top:10px;right:10px;height:10px;background:#fff"></div><div style="left:10px;top:10px;bottom:10px;width:10px;background:#fff"></div><div style="left:0;bottom:0;right:0;height:10px;background:#404040"></div><div style="right:0;top:0;bottom:0;width:10px;background:#404040"></div><div style="left:10px;bottom:10px;right:10px;height:10px;background:#808080"></div><div style="right:10px;top:10px;bottom:10px;width:10px;background:#808080"></div></div><div class="title" style="left:3093.8px;top:2131.7px;width:3275px;height:176.4px;"></div><div class="ico" style="left:3116.9px;top:2145px"><svg style="width:160px;height:160px" viewBox="0 0 16 16">
<defs>
<linearGradient id="apL" x1="0" y1="0" x2="0" y2="1"><stop offset="0" stop-color="#f2f4ff"/><stop offset=".35" stop-color="#c8d2ff"/><stop offset="1" stop-color="#3858e0"/></linearGradient>
<linearGradient id="apD" x1="0" y1="0" x2="0" y2="1"><stop offset="0" stop-color="#0010d8"/><stop offset=".6" stop-color="#0818c8"/><stop offset="1" stop-color="#0008a0"/></linearGradient>
<radialGradient id="apS" cx=".55" cy=".4" r=".7"><stop offset="0" stop-color="#f4f4f4"/><stop offset=".6" stop-color="#cfcfcf"/><stop offset="1" stop-color="#8a8a8a"/></radialGradient>
</defs>
<path d="M10.8 8 L15.6 7.8 L16.4 10.4 Q13.8 11.6 10.6 10.8Z" fill="url(#apS)"/>
<path d="M6.8 0.1 L16.4 -0.1 L16.2 8.2 L7.4 8.5Z" fill="url(#apL)" stroke="#98a0c0" stroke-width=".35"/>
<path d="M7 0.3 L10.7 0.25 L14.5 7.3 L14.3 8.2 L10.6 8.35Z" fill="url(#apD)"/>
<ellipse cx="5.3" cy="14.1" rx="3.5" ry="1.6" fill="url(#apS)"/>
<path d="M3.6 12.2 h3.8 v1.4 h-3.8z" fill="#c4c4c4"/>
<path d="M0.3 4.6 L10.6 4.2 L10.8 12.1 L1.5 12.6Z" fill="url(#apD)" stroke="#98a0c0" stroke-width=".35"/>
<path d="M0.55 4.8 L5.9 4.55 L2.2 11.4 L1.5 12.2Z" fill="url(#apL)"/>
</svg></div><span class="t tt" style="left:3305.4px;top:2155.3px;letter-spacing:2.66px;">Monitor Preview</span><div style="left:5826.9px;top:2149.8px;width:160.6px;height:137.8px;background:#D4D0C8"><div style="left:0;top:0;right:0;height:10px;background:#fff"></div><div style="left:0;top:0;bottom:0;width:10px;background:#fff"></div><div style="left:0;bottom:0;right:0;height:10px;background:#404040"></div><div style="right:0;top:0;bottom:0;width:10px;background:#404040"></div><div style="left:10px;bottom:10px;right:10px;height:10px;background:#808080"></div><div style="right:10px;top:10px;bottom:10px;width:10px;background:#808080"></div><i class="gmin"></i></div><div style="left:5993.8px;top:2149.8px;width:163.1px;height:137.8px;background:#D4D0C8"><div style="left:0;top:0;right:0;height:10px;background:#fff"></div><div style="left:0;top:0;bottom:0;width:10px;background:#fff"></div><div style="left:0;bottom:0;right:0;height:10px;background:#404040"></div><div style="right:0;top:0;bottom:0;width:10px;background:#404040"></div><div style="left:10px;bottom:10px;right:10px;height:10px;background:#808080"></div><div style="right:10px;top:10px;bottom:10px;width:10px;background:#808080"></div><div style="left:30px;top:20px;width:90px;height:90px"><div style="left:0;top:0;right:0;height:20px;background:#000"></div><div style="left:0;bottom:0;right:0;height:10px;background:#000"></div><div style="left:0;top:0;bottom:0;width:10px;background:#000"></div><div style="right:0;top:0;bottom:0;width:10px;background:#000"></div></div></div><div style="left:6183.1px;top:2149.8px;width:163.7px;height:137.8px;background:#D4D0C8"><div style="left:0;top:0;right:0;height:10px;background:#fff"></div><div style="left:0;top:0;bottom:0;width:10px;background:#fff"></div><div style="left:0;bottom:0;right:0;height:10px;background:#404040"></div><div style="right:0;top:0;bottom:0;width:10px;background:#404040"></div><div style="left:10px;bottom:10px;right:10px;height:10px;background:#808080"></div><div style="right:10px;top:10px;bottom:10px;width:10px;background:#808080"></div><svg style="width:160px;height:140px" viewBox="0 0 16 14"><path d="M4.7 3.2 L12.1 9.9 M12.1 3.2 L4.7 9.9" stroke="#000" stroke-width="1.55" fill="none"/></svg></div><div style="left:3093.8px;top:2321.5px;width:3275px;height:1551.1px;background:#3A6EA5;overflow:hidden"><div style="left:1432.5px;top:0px;width:1380.6px;height:652.6px;background:#000;overflow:hidden"><div style="left:0px;top:0px;width:1380.6px;height:30.2px;background:linear-gradient(90deg,#8c8c8c,#bdbdbd)"></div><div style="left:0px;top:30.2px;width:1380.6px;height:30.2px;background:#cfcbc3"></div><div style="left:9.4px;top:38.7px;width:293.8px;height:12.1px;background:repeating-linear-gradient(90deg,#8a8680 0,#8a8680 40px,#cfcbc3 40px,#cfcbc3 60px)"></div><div style="left:1296.9px;top:7.3px;width:68.8px;height:18.1px;background:#e8e6e0;border-left:10px solid #555"></div><div style="left:596.9px;top:216.3px;width:212.5px;height:199.4px;"><svg viewBox="0 0 34 33" style="position:absolute;left:0;top:0;width:212.5px;height:206px"><defs><linearGradient id="pvc1" x1="0" x2="1" y1="0" y2="0"><stop offset="0" stop-color="#f8a838"/><stop offset=".55" stop-color="#f07c08"/><stop offset="1" stop-color="#d85c00"/></linearGradient></defs><path d="M2 31 L5 23 L29 23 L32 31 Q17 34 2 31Z" fill="url(#pvc1)"/><path d="M14.6 2 Q17 0.6 19.4 2 L27.4 25 Q17 29 6.6 25Z" fill="url(#pvc1)"/><path d="M12.4 8.6 Q17 10.2 21.6 8.6 L23.4 13.6 Q17 16 10.6 13.6Z" fill="#eceae6"/><path d="M9.2 17.8 Q17 20.6 24.8 17.8 L26.4 22.6 Q17 26 7.6 22.6Z" fill="#eceae6"/></svg></div></div><div style="left:468.1px;top:163.7px;width:1555px;height:730.5px;background:#fff;overflow:hidden"><div style="left:0px;top:0px;width:1555px;height:56.2px;background:linear-gradient(180deg,#9cb8e6,#bcd0f0)"></div><div style="left:20.6px;top:19.9px;width:334.4px;height:38.7px;background:#f4f6fa;border-radius:15px 15px 0 0"></div><div style="left:36.2px;top:30.8px;width:37.5px;height:18.1px;background:linear-gradient(90deg,#d03020,#30a040)"></div><div style="left:86.2px;top:35.6px;width:87.5px;height:10.9px;background:#777"></div><div style="left:361.2px;top:26px;width:43.8px;height:26.6px;background:#c4d6f2"></div><div style="left:1398.7px;top:7.9px;width:137.5px;height:18.1px;background:#a8bcdc"></div><div style="left:0px;top:56.2px;width:1555px;height:53.2px;background:#f6f7f9"></div><div style="left:23.7px;top:73.1px;width:125px;height:19.3px;background:repeating-linear-gradient(90deg,#a0a0a0 0,#a0a0a0 24px,#f6f7f9 24px,#f6f7f9 50px)"></div><div style="left:161.2px;top:63.4px;width:1300px;height:39.9px;background:#fff;border:5px solid #c8c8c8"></div><div style="left:198.7px;top:76.7px;width:187.5px;height:13.3px;background:#555"></div><div style="left:1448.7px;top:68.3px;width:87.5px;height:30.2px;background:repeating-linear-gradient(90deg,#888 0,#888 30px,#f6f7f9 30px,#f6f7f9 55px)"></div><div style="left:0px;top:109.4px;width:1555px;height:51.4px;background:#fbeea4"></div><div style="left:17.5px;top:116.6px;width:40.6px;height:36.3px;background:radial-gradient(circle,#4080f0 0,#4080f0 30%,#e04030 36%,#e8b020 100%);border-radius:50%"></div><div style="left:80px;top:128.7px;width:431.2px;height:14.5px;background:repeating-linear-gradient(90deg,#7a7040 0,#7a7040 70px,#fbeea4 70px,#fbeea4 85px)"></div><div style="left:555px;top:119px;width:187.5px;height:33.8px;background:#f4ecc0;border:5px solid #b8b080"></div><div style="left:580px;top:129.9px;width:150px;height:12.1px;background:#6a6a50"></div><div style="left:767.5px;top:119px;width:175px;height:33.8px;background:#f4ecc0;border:5px solid #b8b080"></div><div style="left:786.2px;top:129.9px;width:143.8px;height:12.1px;background:#8a8660"></div><div style="left:1498.7px;top:127.5px;width:18.8px;height:15.7px;background:#c8b860"></div><div style="left:0px;top:160.7px;width:1536.2px;height:44.1px;background:#262626"></div><div style="left:30px;top:177px;width:1118.8px;height:12.7px;background:repeating-linear-gradient(90deg,#a4a4a4 0,#a4a4a4 70px,#262626 70px,#262626 96px)"></div><div style="left:1533.7px;top:160.7px;width:21.2px;height:569.8px;background:#dcd8d0"></div><div style="left:586.2px;top:708.2px;width:81.2px;height:27.2px;border:12px solid #4a7ae0;border-radius:50% 50% 0 0;border-bottom:0"></div></div><div style="left:1220.6px;top:575.2px;width:1707.5px;height:803.6px;background:#fbfbfb;overflow:hidden"><div style="left:0px;top:0px;width:1707.5px;height:41.1px;background:linear-gradient(90deg,#9a9a9a,#c8c8c8)"></div><div style="left:5px;top:4.8px;width:153.8px;height:26.6px;background:linear-gradient(180deg,#f09030,#d86010);border-radius:0 0 15px 15px"></div><div style="left:27.5px;top:13.3px;width:93.8px;height:9.7px;background:#f8d8b0"></div><div style="left:1615px;top:4.8px;width:81.2px;height:20.5px;background:#e4e2dc;border-left:10px solid #666"></div><div style="left:0px;top:41.1px;width:1707.5px;height:31.4px;background:#d9d6cf"></div><div style="left:0px;top:72.5px;width:1707.5px;height:48.3px;background:#dcd9d2"></div><div style="left:458.7px;top:78.5px;width:718.8px;height:35px;background:#fff;border:5px solid #aaa"></div><div style="left:1083.7px;top:89.4px;width:81.2px;height:13.3px;background:repeating-linear-gradient(90deg,#aaa 0,#aaa 20px,#fff 20px,#fff 40px)"></div><div style="left:1196.2px;top:78.5px;width:350px;height:35px;background:#fff;border:5px solid #aaa"></div><div style="left:1208.7px;top:83.4px;width:31.2px;height:25.4px;background:linear-gradient(135deg,#e04030,#e8b020 50%,#3060d0);border-radius:50%"></div><div style="left:1258.7px;top:90.6px;width:162.5px;height:10.9px;background:#b8b8c0"></div><div style="left:1515px;top:83.4px;width:25px;height:23px;background:#6080d0"></div><div style="left:1565px;top:81px;width:43.8px;height:31.4px;background:#d0cdc6;border:5px solid #888"></div><div style="left:1577.5px;top:88.2px;width:18.8px;height:18.1px;background:#555"></div><div style="left:1627.5px;top:81px;width:62.5px;height:31.4px;background:#d0cdc6;border:5px solid #888"></div><div style="left:1640px;top:88.2px;width:25px;height:18.1px;background:#4a5a8a"></div><div style="left:1680px;top:120.8px;width:27.5px;height:682.8px;background:#e6e4de"></div><div style="left:1680px;top:120.8px;width:27.5px;height:26.6px;background:#d4d0c8;border:5px solid #777"></div><div style="left:1680px;top:777px;width:27.5px;height:26.6px;background:#d4d0c8;border:5px solid #777"></div><div style="left:1680px;top:438.7px;width:27.5px;height:84.6px;background:#d4d0c8;border:5px solid #777"></div><div style="left:458.7px;top:148px;width:126.6px;height:12.7px;background:repeating-linear-gradient(90deg,#2a40e8 0,#2a40e8 33px,transparent 33px,transparent 41px);opacity:.66"></div><div style="left:601.8px;top:148px;width:822.4px;height:12.7px;background:repeating-linear-gradient(90deg,#2a2a2a 0,#2a2a2a 33px,transparent 33px,transparent 41px);opacity:.66"></div><div style="left:1435.7px;top:148px;width:148px;height:12.7px;background:repeating-linear-gradient(90deg,#2a40e8 0,#2a40e8 33px,transparent 33px,transparent 41px);opacity:.66"></div><div style="left:458.7px;top:176.6px;width:36.2px;height:12.7px;background:repeating-linear-gradient(90deg,#2a40e8 0,#2a40e8 33px,transparent 33px,transparent 41px);opacity:.66"></div><div style="left:458.7px;top:205.3px;width:115.1px;height:12.7px;background:repeating-linear-gradient(90deg,#2a40e8 0,#2a40e8 33px,transparent 33px,transparent 41px);opacity:.66"></div><div style="left:585.4px;top:205.3px;width:871.7px;height:12.7px;background:repeating-linear-gradient(90deg,#2a2a2a 0,#2a2a2a 33px,transparent 33px,transparent 41px);opacity:.66"></div><div style="left:458.7px;top:233.9px;width:82.2px;height:12.7px;background:repeating-linear-gradient(90deg,#2a40e8 0,#2a40e8 33px,transparent 33px,transparent 41px);opacity:.66"></div><div style="left:552.5px;top:233.9px;width:587.2px;height:12.7px;background:repeating-linear-gradient(90deg,#2a2a2a 0,#2a2a2a 33px,transparent 33px,transparent 41px);opacity:.66"></div><div style="left:458.7px;top:262.5px;width:115.1px;height:12.7px;background:repeating-linear-gradient(90deg,#2a40e8 0,#2a40e8 33px,transparent 33px,transparent 41px);opacity:.66"></div><div style="left:585.4px;top:262.5px;width:537.8px;height:12.7px;background:repeating-linear-gradient(90deg,#2a2a2a 0,#2a2a2a 33px,transparent 33px,transparent 41px);opacity:.66"></div><div style="left:458.7px;top:292.7px;width:110.2px;height:12.7px;background:repeating-linear-gradient(90deg,#1060f0 0,#1060f0 33px,transparent 33px,transparent 41px);opacity:.66"></div><div style="left:458.7px;top:322.9px;width:472px;height:12.7px;background:repeating-linear-gradient(90deg,#b030d8 0,#b030d8 33px,transparent 33px,transparent 41px);opacity:.66"></div><div style="left:458.7px;top:351.6px;width:102px;height:12.7px;background:repeating-linear-gradient(90deg,#2a40e8 0,#2a40e8 33px,transparent 33px,transparent 41px);opacity:.66"></div><div style="left:573.9px;top:351.6px;width:1014.8px;height:12.7px;background:repeating-linear-gradient(90deg,#2a2a2a 0,#2a2a2a 33px,transparent 33px,transparent 41px);opacity:.66"></div><div style="left:458.7px;top:380.2px;width:348.7px;height:12.7px;background:repeating-linear-gradient(90deg,#2a2a2a 0,#2a2a2a 33px,transparent 33px,transparent 41px);opacity:.66"></div><div style="left:458.7px;top:408.8px;width:118.4px;height:12.7px;background:repeating-linear-gradient(90deg,#2a40e8 0,#2a40e8 33px,transparent 33px,transparent 41px);opacity:.66"></div><div style="left:590.3px;top:408.8px;width:768.1px;height:12.7px;background:repeating-linear-gradient(90deg,#2a2a2a 0,#2a2a2a 33px,transparent 33px,transparent 41px);opacity:.66"></div><div style="left:458.7px;top:437.4px;width:93.8px;height:12.7px;background:repeating-linear-gradient(90deg,#2a40e8 0,#2a40e8 33px,transparent 33px,transparent 41px);opacity:.66"></div><div style="left:568.9px;top:437.4px;width:646.4px;height:12.7px;background:repeating-linear-gradient(90deg,#2a2a2a 0,#2a2a2a 33px,transparent 33px,transparent 41px);opacity:.66"></div><div style="left:458.7px;top:466px;width:115.1px;height:12.7px;background:repeating-linear-gradient(90deg,#2a40e8 0,#2a40e8 33px,transparent 33px,transparent 41px);opacity:.66"></div><div style="left:590.3px;top:466px;width:477px;height:12.7px;background:repeating-linear-gradient(90deg,#2a2a2a 0,#2a2a2a 33px,transparent 33px,transparent 41px);opacity:.66"></div><div style="left:458.7px;top:494.7px;width:85.5px;height:12.7px;background:repeating-linear-gradient(90deg,#2a40e8 0,#2a40e8 33px,transparent 33px,transparent 41px);opacity:.66"></div><div style="left:557.4px;top:494.7px;width:639.8px;height:12.7px;background:repeating-linear-gradient(90deg,#2a2a2a 0,#2a2a2a 33px,transparent 33px,transparent 41px);opacity:.66"></div><div style="left:458.7px;top:524.9px;width:302.6px;height:12.7px;background:repeating-linear-gradient(90deg,#2a40e8 0,#2a40e8 33px,transparent 33px,transparent 41px);opacity:.66"></div><div style="left:774.5px;top:524.9px;width:411.2px;height:12.7px;background:repeating-linear-gradient(90deg,#2a2a2a 0,#2a2a2a 33px,transparent 33px,transparent 41px);opacity:.66"></div><div style="left:458.7px;top:553.5px;width:151.3px;height:12.7px;background:repeating-linear-gradient(90deg,#2a40e8 0,#2a40e8 33px,transparent 33px,transparent 41px);opacity:.66"></div><div style="left:626.5px;top:553.5px;width:460.5px;height:12.7px;background:repeating-linear-gradient(90deg,#2a2a2a 0,#2a2a2a 33px,transparent 33px,transparent 41px);opacity:.66"></div><div style="left:458.7px;top:582.1px;width:93.8px;height:12.7px;background:repeating-linear-gradient(90deg,#2a40e8 0,#2a40e8 33px,transparent 33px,transparent 41px);opacity:.66"></div><div style="left:568.9px;top:582.1px;width:978.6px;height:12.7px;background:repeating-linear-gradient(90deg,#2a2a2a 0,#2a2a2a 33px,transparent 33px,transparent 41px);opacity:.66"></div><div style="left:458.7px;top:610.7px;width:768.1px;height:12.7px;background:repeating-linear-gradient(90deg,#2a2a2a 0,#2a2a2a 33px,transparent 33px,transparent 41px);opacity:.66"></div><div style="left:458.7px;top:639.4px;width:143.1px;height:12.7px;background:repeating-linear-gradient(90deg,#2a40e8 0,#2a40e8 33px,transparent 33px,transparent 41px);opacity:.66"></div><div style="left:618.3px;top:639.4px;width:986.8px;height:12.7px;background:repeating-linear-gradient(90deg,#2a2a2a 0,#2a2a2a 33px,transparent 33px,transparent 41px);opacity:.66"></div><div style="left:458.7px;top:668px;width:65.8px;height:12.7px;background:repeating-linear-gradient(90deg,#1060f0 0,#1060f0 33px,transparent 33px,transparent 41px);opacity:.66"></div><div style="left:458.7px;top:698.2px;width:69.1px;height:12.7px;background:repeating-linear-gradient(90deg,#2a40e8 0,#2a40e8 33px,transparent 33px,transparent 41px);opacity:.66"></div><div style="left:541px;top:698.2px;width:184.2px;height:12.7px;background:repeating-linear-gradient(90deg,#2a2a2a 0,#2a2a2a 33px,transparent 33px,transparent 41px);opacity:.66"></div><div style="left:733.4px;top:698.2px;width:65.8px;height:12.7px;background:repeating-linear-gradient(90deg,#2a40e8 0,#2a40e8 33px,transparent 33px,transparent 41px);opacity:.66"></div><div style="left:807.4px;top:698.2px;width:49.3px;height:12.7px;background:repeating-linear-gradient(90deg,#2a2a2a 0,#2a2a2a 33px,transparent 33px,transparent 41px);opacity:.66"></div><div style="left:860.1px;top:698.2px;width:62.5px;height:12.7px;background:repeating-linear-gradient(90deg,#2a40e8 0,#2a40e8 33px,transparent 33px,transparent 41px);opacity:.66"></div><div style="left:930.8px;top:698.2px;width:583.9px;height:12.7px;background:repeating-linear-gradient(90deg,#2a2a2a 0,#2a2a2a 33px,transparent 33px,transparent 41px);opacity:.66"></div><div style="left:458.7px;top:726.8px;width:176px;height:12.7px;background:repeating-linear-gradient(90deg,#2a40e8 0,#2a40e8 33px,transparent 33px,transparent 41px);opacity:.66"></div><div style="left:646.2px;top:726.8px;width:618.4px;height:12.7px;background:repeating-linear-gradient(90deg,#2a2a2a 0,#2a2a2a 33px,transparent 33px,transparent 41px);opacity:.66"></div><div style="left:458.7px;top:755.4px;width:148px;height:12.7px;background:repeating-linear-gradient(90deg,#2a40e8 0,#2a40e8 33px,transparent 33px,transparent 41px);opacity:.66"></div><div style="left:618.3px;top:755.4px;width:477px;height:12.7px;background:repeating-linear-gradient(90deg,#2a2a2a 0,#2a2a2a 33px,transparent 33px,transparent 41px);opacity:.66"></div></div><div style="left:221.9px;top:621.1px;width:1453.1px;height:785.5px;background:#d8d5ce;overflow:hidden;box-shadow:0 0 0 4px #8a8a8a"><div style="left:0px;top:0px;width:1453.1px;height:33.7px;background:linear-gradient(90deg,#b4b2ac,#dedbd4)"></div><div style="left:13.4px;top:6.7px;width:16.4px;height:22.3px;background:#e8c850"></div><div style="left:36.4px;top:13px;width:65.8px;height:11.1px;background:#8a8882;opacity:.6"></div><div style="left:1327.6px;top:3.5px;width:119.3px;height:22.3px;background:#e6e4de;border-left:10px solid #666"></div><div style="left:0px;top:33.7px;width:1453.1px;height:52.5px;background:#d8d5ce"></div><div style="left:13.4px;top:41.7px;width:49.3px;height:38.2px;background:radial-gradient(circle,#e8f0ff 0,#5088d8 45%,#2858b0 100%);border-radius:50%"></div><div style="left:72.6px;top:41.7px;width:39.5px;height:38.2px;background:radial-gradient(circle,#f0f0f0 0,#b8b8b8 60%,#a0a0a0 100%);border-radius:50%"></div><div style="left:125.3px;top:40.1px;width:940.8px;height:41.3px;background:#fbfbfb;border:5px solid #999"></div><div style="left:138.4px;top:48px;width:19.7px;height:25.4px;background:#e8c850"></div><div style="left:177.9px;top:54.4px;width:348.7px;height:14.3px;background:repeating-linear-gradient(90deg,#666 0,#666 100px,transparent 100px,transparent 130px);opacity:.7"></div><div style="left:1033.2px;top:54.4px;width:13.2px;height:14.3px;background:#555"></div><div style="left:1072.6px;top:44.8px;width:36.2px;height:31.8px;background:#38a838;border-radius:10px"></div><div style="left:1122px;top:40.1px;width:324.9px;height:41.3px;background:#fff;border:5px solid #999"></div><div style="left:1138.4px;top:54.4px;width:115.1px;height:12.7px;background:#999;opacity:.7"></div><div style="left:0px;top:86.2px;width:1453.1px;height:44.5px;background:#dcd9d2"></div><div style="left:23.3px;top:98.9px;width:539.5px;height:19.1px;background:repeating-linear-gradient(90deg,#5a5a66 0,#5a5a66 220px,transparent 220px,transparent 280px);opacity:.6"></div><div style="left:1270px;top:95.7px;width:115.1px;height:25.4px;background:repeating-linear-gradient(90deg,#5a6a96 0,#5a6a96 60px,transparent 60px,transparent 110px);opacity:.7"></div><div style="left:6.2px;top:130.7px;width:359.1px;height:575.6px;background:#fff"></div><div style="left:75.9px;top:138.7px;width:21.4px;height:20.7px;background:#ecc840"></div><div style="left:107.2px;top:141.8px;width:98.7px;height:12.7px;background:#444;opacity:.55"></div><div style="left:75.9px;top:167.8px;width:21.4px;height:20.7px;background:#ecc840"></div><div style="left:107.2px;top:170.9px;width:205.6px;height:12.7px;background:#444;opacity:.55"></div><div style="left:75.9px;top:196.9px;width:21.4px;height:20.7px;background:#ecc840"></div><div style="left:107.2px;top:200px;width:74px;height:12.7px;background:#444;opacity:.55"></div><div style="left:75.9px;top:226px;width:21.4px;height:20.7px;background:#ecc840"></div><div style="left:107.2px;top:229.1px;width:57.6px;height:12.7px;background:#444;opacity:.55"></div><div style="left:75.9px;top:255px;width:21.4px;height:20.7px;background:#ecc840"></div><div style="left:107.2px;top:258.2px;width:115.1px;height:12.7px;background:#444;opacity:.55"></div><div style="left:75.9px;top:284.1px;width:21.4px;height:20.7px;background:#ecc840"></div><div style="left:107.2px;top:287.3px;width:131.6px;height:12.7px;background:#444;opacity:.55"></div><div style="left:75.9px;top:313.2px;width:21.4px;height:20.7px;background:#ecc840"></div><div style="left:107.2px;top:316.4px;width:90.5px;height:12.7px;background:#444;opacity:.55"></div><div style="left:75.9px;top:342.3px;width:21.4px;height:20.7px;background:#ecc840"></div><div style="left:107.2px;top:345.5px;width:123.4px;height:12.7px;background:#444;opacity:.55"></div><div style="left:75.9px;top:371.4px;width:21.4px;height:20.7px;background:#ecc840"></div><div style="left:107.2px;top:374.6px;width:164.5px;height:12.7px;background:#444;opacity:.55"></div><div style="left:75.9px;top:400.5px;width:21.4px;height:20.7px;background:#ecc840"></div><div style="left:107.2px;top:403.7px;width:115.1px;height:12.7px;background:#444;opacity:.55"></div><div style="left:75.9px;top:429.6px;width:21.4px;height:20.7px;background:#ecc840"></div><div style="left:107.2px;top:432.8px;width:82.2px;height:12.7px;background:#444;opacity:.55"></div><div style="left:75.9px;top:458.7px;width:21.4px;height:20.7px;background:#ecc840"></div><div style="left:107.2px;top:461.9px;width:90.5px;height:12.7px;background:#444;opacity:.55"></div><div style="left:75.9px;top:487.8px;width:21.4px;height:20.7px;background:#ecc840"></div><div style="left:10.1px;top:484.7px;width:355.3px;height:27px;background:#d4d0c8"></div><div style="left:75.9px;top:487.8px;width:21.4px;height:20.7px;background:#ecc840"></div><div style="left:107.2px;top:491px;width:65.8px;height:12.7px;background:#444;opacity:.55"></div><div style="left:75.9px;top:516.9px;width:21.4px;height:20.7px;background:#ecc840"></div><div style="left:107.2px;top:520.1px;width:213.8px;height:12.7px;background:#444;opacity:.55"></div><div style="left:75.9px;top:546px;width:21.4px;height:20.7px;background:#ecc840"></div><div style="left:107.2px;top:549.2px;width:74px;height:12.7px;background:#444;opacity:.55"></div><div style="left:75.9px;top:575.1px;width:21.4px;height:20.7px;background:#ecc840"></div><div style="left:107.2px;top:578.3px;width:65.8px;height:12.7px;background:#444;opacity:.55"></div><div style="left:75.9px;top:604.2px;width:21.4px;height:20.7px;background:#ecc840"></div><div style="left:107.2px;top:607.4px;width:82.2px;height:12.7px;background:#444;opacity:.55"></div><div style="left:75.9px;top:633.3px;width:21.4px;height:20.7px;background:#ecc840"></div><div style="left:107.2px;top:636.5px;width:90.5px;height:12.7px;background:#444;opacity:.55"></div><div style="left:36.4px;top:687.2px;width:23px;height:15.9px;background:#3078c8"></div><div style="left:66.1px;top:688.8px;width:78.9px;height:12.7px;background:#555;opacity:.55"></div><div style="left:365.4px;top:130.7px;width:31.2px;height:575.6px;background:#e9e7e2"></div><div style="left:365.4px;top:130.7px;width:31.2px;height:28.6px;background:#d4d0c8;border:5px solid #777"></div><div style="left:365.4px;top:677.7px;width:31.2px;height:28.6px;background:#d4d0c8;border:5px solid #777"></div><div style="left:365.4px;top:375.6px;width:31.2px;height:262.4px;background:#d4d0c8;border:5px solid #777"></div><div style="left:396.6px;top:130.7px;width:1056.5px;height:575.6px;background:#fff"></div><div style="left:396.6px;top:133.9px;width:1056.5px;height:31.8px;background:#d8d5ce;border-bottom:5px solid #888"></div><div style="left:418px;top:143.4px;width:49.3px;height:14.3px;background:#555;opacity:.6"></div><div style="left:714.1px;top:143.4px;width:39.5px;height:14.3px;background:#555;opacity:.6"></div><div style="left:957.5px;top:143.4px;width:39.5px;height:14.3px;background:#555;opacity:.6"></div><div style="left:1260.1px;top:143.4px;width:29.6px;height:14.3px;background:#555;opacity:.6"></div><div style="left:704.2px;top:133.9px;width:4.9px;height:31.8px;background:#999"></div><div style="left:944.3px;top:133.9px;width:4.9px;height:31.8px;background:#999"></div><div style="left:1250.3px;top:133.9px;width:4.9px;height:31.8px;background:#999"></div><div style="left:1375.3px;top:133.9px;width:4.9px;height:31.8px;background:#999"></div><div style="left:431.2px;top:181.6px;width:24.7px;height:22.3px;background:#486080"></div><div style="left:462.4px;top:186.4px;width:144.7px;height:12.7px;background:#333;opacity:.6"></div><div style="left:714.1px;top:186.4px;width:144.7px;height:12.7px;background:repeating-linear-gradient(90deg,#333 0,#333 84px,transparent 84px,transparent 100px);opacity:.6"></div><div style="left:957.5px;top:186.4px;width:85.5px;height:12.7px;background:#333;opacity:.6"></div><div style="left:1332.5px;top:186.4px;width:36.2px;height:12.7px;background:#333;opacity:.6"></div><div style="left:431.2px;top:213.4px;width:24.7px;height:22.3px;background:#5a8aa0"></div><div style="left:462.4px;top:218.2px;width:98.7px;height:12.7px;background:#333;opacity:.6"></div><div style="left:714.1px;top:218.2px;width:144.7px;height:12.7px;background:repeating-linear-gradient(90deg,#333 0,#333 84px,transparent 84px,transparent 100px);opacity:.6"></div><div style="left:957.5px;top:218.2px;width:85.5px;height:12.7px;background:#333;opacity:.6"></div><div style="left:1332.5px;top:218.2px;width:36.2px;height:12.7px;background:#333;opacity:.6"></div><div style="left:431.2px;top:245.2px;width:24.7px;height:22.3px;background:#5a8aa0"></div><div style="left:462.4px;top:250px;width:98.7px;height:12.7px;background:#333;opacity:.6"></div><div style="left:714.1px;top:250px;width:144.7px;height:12.7px;background:repeating-linear-gradient(90deg,#333 0,#333 84px,transparent 84px,transparent 100px);opacity:.6"></div><div style="left:957.5px;top:250px;width:85.5px;height:12.7px;background:#333;opacity:.6"></div><div style="left:1332.5px;top:250px;width:36.2px;height:12.7px;background:#333;opacity:.6"></div><div style="left:431.2px;top:277px;width:24.7px;height:22.3px;background:#486080"></div><div style="left:462.4px;top:281.8px;width:177.6px;height:12.7px;background:#333;opacity:.6"></div><div style="left:714.1px;top:281.8px;width:144.7px;height:12.7px;background:repeating-linear-gradient(90deg,#333 0,#333 84px,transparent 84px,transparent 100px);opacity:.6"></div><div style="left:957.5px;top:281.8px;width:85.5px;height:12.7px;background:#333;opacity:.6"></div><div style="left:1332.5px;top:281.8px;width:36.2px;height:12.7px;background:#333;opacity:.6"></div><div style="left:431.2px;top:308.8px;width:24.7px;height:22.3px;background:#3070b8"></div><div style="left:462.4px;top:313.6px;width:134.9px;height:12.7px;background:#333;opacity:.6"></div><div style="left:714.1px;top:313.6px;width:144.7px;height:12.7px;background:repeating-linear-gradient(90deg,#333 0,#333 84px,transparent 84px,transparent 100px);opacity:.6"></div><div style="left:957.5px;top:313.6px;width:78.9px;height:12.7px;background:#333;opacity:.6"></div><div style="left:1332.5px;top:313.6px;width:36.2px;height:12.7px;background:#333;opacity:.6"></div><div style="left:431.2px;top:340.6px;width:24.7px;height:22.3px;background:#6a8aa0"></div><div style="left:462.4px;top:345.4px;width:125px;height:12.7px;background:#333;opacity:.6"></div><div style="left:714.1px;top:345.4px;width:144.7px;height:12.7px;background:repeating-linear-gradient(90deg,#333 0,#333 84px,transparent 84px,transparent 100px);opacity:.6"></div><div style="left:957.5px;top:345.4px;width:78.9px;height:12.7px;background:#333;opacity:.6"></div><div style="left:1332.5px;top:345.4px;width:36.2px;height:12.7px;background:#333;opacity:.6"></div><div style="left:431.2px;top:372.4px;width:24.7px;height:22.3px;background:#88a8e0"></div><div style="left:462.4px;top:377.2px;width:161.2px;height:12.7px;background:#333;opacity:.6"></div><div style="left:714.1px;top:377.2px;width:144.7px;height:12.7px;background:repeating-linear-gradient(90deg,#333 0,#333 84px,transparent 84px,transparent 100px);opacity:.6"></div><div style="left:957.5px;top:377.2px;width:95.4px;height:12.7px;background:#333;opacity:.6"></div><div style="left:1332.5px;top:377.2px;width:36.2px;height:12.7px;background:#333;opacity:.6"></div><div style="left:431.2px;top:404.2px;width:24.7px;height:22.3px;background:#48804a"></div><div style="left:462.4px;top:409px;width:128.3px;height:12.7px;background:#333;opacity:.6"></div><div style="left:714.1px;top:409px;width:144.7px;height:12.7px;background:repeating-linear-gradient(90deg,#333 0,#333 84px,transparent 84px,transparent 100px);opacity:.6"></div><div style="left:957.5px;top:409px;width:213.8px;height:12.7px;background:#333;opacity:.6"></div><div style="left:1332.5px;top:409px;width:36.2px;height:12.7px;background:#333;opacity:.6"></div><div style="left:431.2px;top:436px;width:24.7px;height:22.3px;background:#48804a"></div><div style="left:462.4px;top:440.8px;width:111.8px;height:12.7px;background:#333;opacity:.6"></div><div style="left:714.1px;top:440.8px;width:144.7px;height:12.7px;background:repeating-linear-gradient(90deg,#333 0,#333 84px,transparent 84px,transparent 100px);opacity:.6"></div><div style="left:957.5px;top:440.8px;width:213.8px;height:12.7px;background:#333;opacity:.6"></div><div style="left:1332.5px;top:440.8px;width:36.2px;height:12.7px;background:#333;opacity:.6"></div><div style="left:431.2px;top:467.8px;width:24.7px;height:22.3px;background:#555"></div><div style="left:462.4px;top:472.6px;width:148px;height:12.7px;background:#333;opacity:.6"></div><div style="left:714.1px;top:472.6px;width:144.7px;height:12.7px;background:repeating-linear-gradient(90deg,#333 0,#333 84px,transparent 84px,transparent 100px);opacity:.6"></div><div style="left:957.5px;top:472.6px;width:85.5px;height:12.7px;background:#333;opacity:.6"></div><div style="left:1332.5px;top:472.6px;width:36.2px;height:12.7px;background:#333;opacity:.6"></div><div style="left:419.7px;top:496.4px;width:1008.5px;height:28.6px;background:#0a246a"></div><div style="left:431.2px;top:499.6px;width:24.7px;height:22.3px;background:#cc9"></div><div style="left:462.4px;top:504.4px;width:131.6px;height:12.7px;background:#fff;opacity:.9"></div><div style="left:714.1px;top:504.4px;width:144.7px;height:12.7px;background:repeating-linear-gradient(90deg,#fff 0,#fff 84px,transparent 84px,transparent 100px);opacity:.9"></div><div style="left:957.5px;top:504.4px;width:85.5px;height:12.7px;background:#fff;opacity:.9"></div><div style="left:1332.5px;top:504.4px;width:36.2px;height:12.7px;background:#fff;opacity:.9"></div><div style="left:431.2px;top:531.4px;width:24.7px;height:22.3px;background:#aaa"></div><div style="left:462.4px;top:536.2px;width:213.8px;height:12.7px;background:#333;opacity:.6"></div><div style="left:714.1px;top:536.2px;width:144.7px;height:12.7px;background:repeating-linear-gradient(90deg,#333 0,#333 84px,transparent 84px,transparent 100px);opacity:.6"></div><div style="left:957.5px;top:536.2px;width:65.8px;height:12.7px;background:#333;opacity:.6"></div><div style="left:1332.5px;top:536.2px;width:36.2px;height:12.7px;background:#333;opacity:.6"></div><div style="left:431.2px;top:563.2px;width:24.7px;height:22.3px;background:#88b8e0"></div><div style="left:462.4px;top:568px;width:105.3px;height:12.7px;background:#333;opacity:.6"></div><div style="left:714.1px;top:568px;width:144.7px;height:12.7px;background:repeating-linear-gradient(90deg,#333 0,#333 84px,transparent 84px,transparent 100px);opacity:.6"></div><div style="left:957.5px;top:568px;width:115.1px;height:12.7px;background:#333;opacity:.6"></div><div style="left:1332.5px;top:568px;width:36.2px;height:12.7px;background:#333;opacity:.6"></div><div style="left:431.2px;top:595px;width:24.7px;height:22.3px;background:#88b8e0"></div><div style="left:462.4px;top:599.8px;width:230.3px;height:12.7px;background:#333;opacity:.6"></div><div style="left:714.1px;top:599.8px;width:144.7px;height:12.7px;background:repeating-linear-gradient(90deg,#333 0,#333 84px,transparent 84px,transparent 100px);opacity:.6"></div><div style="left:957.5px;top:599.8px;width:115.1px;height:12.7px;background:#333;opacity:.6"></div><div style="left:1332.5px;top:599.8px;width:36.2px;height:12.7px;background:#333;opacity:.6"></div><div style="left:431.2px;top:626.8px;width:24.7px;height:22.3px;background:#2020c0"></div><div style="left:462.4px;top:631.6px;width:164.5px;height:12.7px;background:#333;opacity:.6"></div><div style="left:714.1px;top:631.6px;width:144.7px;height:12.7px;background:repeating-linear-gradient(90deg,#333 0,#333 84px,transparent 84px,transparent 100px);opacity:.6"></div><div style="left:957.5px;top:631.6px;width:78.9px;height:12.7px;background:#333;opacity:.6"></div><div style="left:1332.5px;top:631.6px;width:36.2px;height:12.7px;background:#333;opacity:.6"></div><div style="left:431.2px;top:658.6px;width:24.7px;height:22.3px;background:#8898a8"></div><div style="left:462.4px;top:663.4px;width:164.5px;height:12.7px;background:#333;opacity:.6"></div><div style="left:714.1px;top:663.4px;width:144.7px;height:12.7px;background:repeating-linear-gradient(90deg,#333 0,#333 84px,transparent 84px,transparent 100px);opacity:.6"></div><div style="left:957.5px;top:663.4px;width:134.9px;height:12.7px;background:#333;opacity:.6"></div><div style="left:1332.5px;top:663.4px;width:36.2px;height:12.7px;background:#333;opacity:.6"></div><div style="left:1421.9px;top:165.7px;width:31.2px;height:521.5px;background:#e9e7e2"></div><div style="left:396.6px;top:687.2px;width:1056.5px;height:19.1px;background:#e9e7e2"></div><div style="left:414.7px;top:687.2px;width:830.6px;height:19.1px;background:#d4d0c8;border:5px solid #888"></div><div style="left:0px;top:706.3px;width:1453.1px;height:79.2px;background:#f1f0ee;border-top:5px solid #aaa"></div><div style="left:39.7px;top:715.9px;width:72.4px;height:63.6px;background:#55553a;border:12px solid #222;border-radius:10px"></div><div style="left:56.2px;top:728.6px;width:39.5px;height:41.3px;background:#c8c898"></div><div style="left:138.4px;top:727px;width:136.5px;height:12.7px;background:repeating-linear-gradient(90deg,#333 0,#333 70px,transparent 70px,transparent 90px);opacity:.6"></div><div style="left:357.2px;top:727px;width:57.6px;height:12.7px;background:repeating-linear-gradient(90deg,#333 0,#333 70px,transparent 70px,transparent 90px);opacity:.6"></div><div style="left:450.9px;top:727px;width:62.5px;height:12.7px;background:repeating-linear-gradient(90deg,#333 0,#333 70px,transparent 70px,transparent 90px);opacity:.6"></div><div style="left:719px;top:727px;width:106.9px;height:12.7px;background:repeating-linear-gradient(90deg,#333 0,#333 70px,transparent 70px,transparent 90px);opacity:.6"></div><div style="left:998.6px;top:727px;width:246.7px;height:12.7px;background:repeating-linear-gradient(90deg,#333 0,#333 70px,transparent 70px,transparent 90px);opacity:.6"></div><div style="left:138.4px;top:752.4px;width:82.2px;height:12.7px;background:repeating-linear-gradient(90deg,#333 0,#333 70px,transparent 70px,transparent 90px);opacity:.6"></div><div style="left:283.2px;top:752.4px;width:279.6px;height:12.7px;background:repeating-linear-gradient(90deg,#333 0,#333 70px,transparent 70px,transparent 90px);opacity:.6"></div><div style="left:645px;top:752.4px;width:263.2px;height:12.7px;background:repeating-linear-gradient(90deg,#333 0,#333 70px,transparent 70px,transparent 90px);opacity:.6"></div><div style="left:418px;top:723.8px;width:19.7px;height:19.1px;background:#48a048"></div></div></div>
</div>
</div></div>
</body></html>
